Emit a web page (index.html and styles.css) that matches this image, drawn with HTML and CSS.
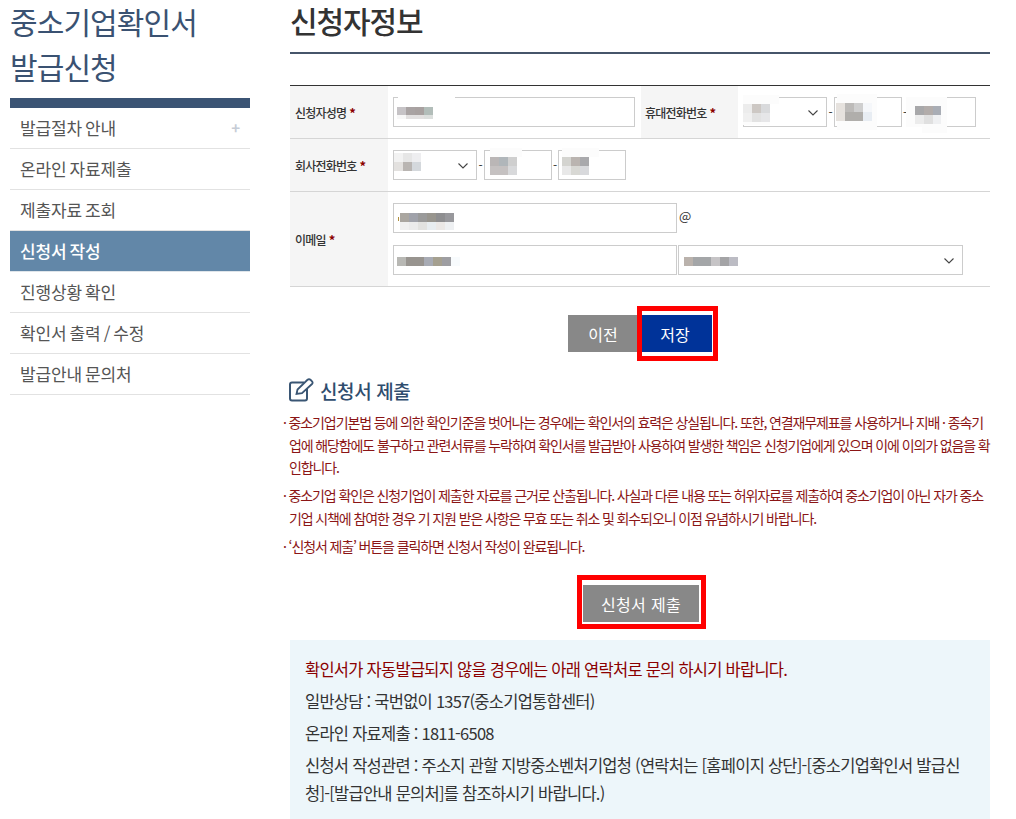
FILE: index.html
```html
<!DOCTYPE html>
<html lang="ko">
<head>
<meta charset="utf-8">
<title>신청자정보</title>
<link rel="stylesheet" href="styles.css">
</head>
<body>
<div class="page">
  <aside class="side">
    <h2 class="side-title">중소기업확인서<br>발급신청</h2>
    <ul class="menu">
      <li class="menu-item has-plus">발급절차 안내<span class="plus">+</span></li>
      <li class="menu-item">온라인 자료제출</li>
      <li class="menu-item">제출자료 조회</li>
      <li class="menu-item active">신청서 작성</li>
      <li class="menu-item">진행상황 확인</li>
      <li class="menu-item">확인서 출력 / 수정</li>
      <li class="menu-item">발급안내 문의처</li>
    </ul>
  </aside>
  <main class="main">
    <h1 class="page-title">신청자정보</h1>
    <div class="form">
      <div class="row row-a">
        <div class="th">신청자성명 <b>*</b></div>
        <div class="td name-cell"><div class="field w-name"><svg class="mosaic m-name" width="60" height="24" viewBox="0 0 60 24"><rect x="1" y="0" width="57" height="9" fill="#fff"/><rect x="0" y="10" width="9" height="8" fill="#c6c3c6"/><rect x="9" y="10" width="9" height="8" fill="#a9a3a3"/><rect x="18" y="10" width="9" height="8" fill="#a8a1a0"/><rect x="27" y="10" width="9" height="8" fill="#b2bdb9"/><rect x="0" y="18" width="9" height="4" fill="#f7f7f7"/><rect x="9" y="18" width="18" height="4" fill="#e2e0e0"/><rect x="27" y="18" width="9" height="4" fill="#dcdfdd"/></svg></div></div>
        <div class="th th-mid">휴대전화번호 <b>*</b></div>
        <div class="td phones">
          <div class="field select w-s"><svg class="mosaic m-p1" width="36" height="30" viewBox="0 0 36 30"><rect x="0" y="0" width="36" height="9" fill="#fcfcfc"/><rect x="0" y="9" width="27" height="21" fill="#fcfcfc"/><rect x="0" y="9" width="9" height="9" fill="#ececec"/><rect x="9" y="9" width="9" height="9" fill="#cdc8c4"/><rect x="18" y="9" width="9" height="9" fill="#d9dadc"/><rect x="0" y="18" width="9" height="9" fill="#f0f0f0"/><rect x="9" y="18" width="9" height="9" fill="#e2e2e2"/><rect x="18" y="18" width="9" height="9" fill="#e6e6e8"/></svg><svg class="chev" width="10" height="6" viewBox="0 0 10 6"><path d="M.5.500 5 5 9.500.5" fill="none" stroke="#444" stroke-width="1.100"/></svg></div>
          <span class="dash">-</span>
          <div class="field w-p"><svg class="mosaic m-p2" width="42" height="36" viewBox="0 0 42 36"><rect x="1" y="0" width="40" height="36" fill="#fcfcfc"/><rect x="0" y="9" width="9" height="18" fill="#e6e2de"/><rect x="9" y="9" width="9" height="9" fill="#bdbbb9"/><rect x="18" y="9" width="9" height="9" fill="#cfcfcf"/><rect x="9" y="18" width="18" height="9" fill="#b0aeab"/><rect x="27" y="9" width="9" height="9" fill="#f5f7fa"/><rect x="27" y="18" width="9" height="9" fill="#e8edf3"/></svg></div>
          <span class="dash dash-b">-</span>
          <div class="field w-p"><svg class="mosaic m-p3" width="41" height="36" viewBox="0 0 41 36"><rect x="0" y="0" width="41" height="30" fill="#fcfcfc"/><rect x="16" y="30" width="25" height="6" fill="#fcfcfc"/><rect x="9" y="9" width="9" height="9" fill="#a8a8aa"/><rect x="18" y="9" width="9" height="9" fill="#b2acaa"/><rect x="27" y="9" width="8" height="9" fill="#a9adb5"/><rect x="9" y="18" width="9" height="9" fill="#ececec"/><rect x="18" y="18" width="9" height="9" fill="#e0e0e0"/><rect x="27" y="18" width="8" height="9" fill="#eff0f2"/></svg></div>
        </div>
      </div>
      <div class="row row-a">
        <div class="th">회사전화번호 <b>*</b></div>
        <div class="td phones">
          <div class="field select w-s"><svg class="mosaic m-c1" width="27" height="18" viewBox="0 0 27 18"><rect x="0" y="0" width="9" height="9" fill="#f2f2f2"/><rect x="9" y="0" width="9" height="9" fill="#e6e6e6"/><rect x="18" y="0" width="9" height="9" fill="#eeeef0"/><rect x="0" y="9" width="9" height="9" fill="#e3e1df"/><rect x="9" y="9" width="9" height="9" fill="#b9b5b2"/><rect x="18" y="9" width="9" height="9" fill="#d4d8dc"/></svg><svg class="chev" width="10" height="6" viewBox="0 0 10 6"><path d="M.5.500 5 5 9.500.5" fill="none" stroke="#444" stroke-width="1.100"/></svg></div>
          <span class="dash">-</span>
          <div class="field w-p"><svg class="mosaic m-c2" width="32" height="27" viewBox="0 0 32 27"><rect x="0" y="0" width="32" height="9" fill="#fcfcfc"/><rect x="0" y="9" width="9" height="9" fill="#bab6b6"/><rect x="9" y="9" width="9" height="9" fill="#b0b6ba"/><rect x="18" y="9" width="9" height="9" fill="#cfcfcf"/><rect x="0" y="18" width="18" height="9" fill="#c5c1c1"/><rect x="18" y="18" width="9" height="9" fill="#d8d9db"/></svg></div>
          <span class="dash dash-b">-</span>
          <div class="field w-p"><svg class="mosaic m-c3" width="37" height="27" viewBox="0 0 37 27"><rect x="0" y="0" width="37" height="9" fill="#fcfcfc"/><rect x="0" y="9" width="9" height="9" fill="#d4d4d0"/><rect x="9" y="9" width="9" height="9" fill="#bab4b0"/><rect x="18" y="9" width="9" height="9" fill="#a9a9ac"/><rect x="0" y="18" width="9" height="9" fill="#e8e8e8"/><rect x="9" y="18" width="9" height="9" fill="#d8d8d4"/><rect x="18" y="18" width="9" height="9" fill="#d8d9dc"/></svg></div>
        </div>
      </div>
      <div class="row row-c">
        <div class="th">이메일 <b>*</b></div>
        <div class="td mail">
          <div class="mail-line">
            <div class="field w-m"><svg class="mosaic m-e1" width="56" height="17" viewBox="0 0 56 17"><rect x="0" y="4" width="1" height="4" fill="#b09040"/><rect x="2" y="0" width="9" height="9" fill="#aaa6a0"/><rect x="11" y="0" width="9" height="9" fill="#a0a2aa"/><rect x="20" y="0" width="9" height="9" fill="#9a9a9a"/><rect x="29" y="0" width="9" height="9" fill="#98958e"/><rect x="38" y="0" width="9" height="9" fill="#8e8e90"/><rect x="47" y="0" width="9" height="9" fill="#98989c"/><rect x="2" y="9" width="9" height="8" fill="#f0f0f0"/><rect x="11" y="9" width="9" height="8" fill="#ebebeb"/><rect x="20" y="9" width="9" height="8" fill="#e2e2e0"/><rect x="29" y="9" width="9" height="8" fill="#e8edf0"/><rect x="38" y="9" width="9" height="8" fill="#ebe8e6"/><rect x="47" y="9" width="9" height="8" fill="#eef0f2"/></svg></div>
            <span class="at">@</span>
          </div>
          <div class="mail-line">
            <div class="field w-m"><svg class="mosaic m-e2" width="63" height="9" viewBox="0 0 63 9"><rect x="0" y="0" width="9" height="9" fill="#b8b8b4"/><rect x="9" y="0" width="18" height="9" fill="#98948f"/><rect x="27" y="0" width="9" height="9" fill="#a8abb4"/><rect x="36" y="0" width="9" height="9" fill="#a5a090"/><rect x="45" y="0" width="9" height="9" fill="#9e9ea2"/><rect x="54" y="0" width="9" height="9" fill="#f8fbfd"/></svg></div>
            <div class="field select w-ms"><svg class="mosaic m-e3" width="54" height="9" viewBox="0 0 54 9"><rect x="0" y="0" width="9" height="9" fill="#bab2ac"/><rect x="9" y="0" width="18" height="9" fill="#a4a6a8"/><rect x="27" y="0" width="9" height="9" fill="#c6c4c6"/><rect x="36" y="0" width="9" height="9" fill="#a4a4a6"/><rect x="45" y="0" width="9" height="9" fill="#bcbcc4"/></svg><svg class="chev" width="10" height="6" viewBox="0 0 10 6"><path d="M.5.500 5 5 9.500.5" fill="none" stroke="#444" stroke-width="1.100"/></svg></div>
          </div>
        </div>
      </div>
    </div>
    <div class="btns">
      <a class="btn gray">이전</a><a class="btn blue">저장<span class="mark mark-save"></span></a>
    </div>
    <h3 class="sub"><svg class="edit" width="28" height="24" viewBox="0 0 28 24"><path d="M16 4.500H4Q2 4.500 2 6.500V20.500Q2 22.500 4 22.500H17Q19 22.500 19 20.500V11" fill="none" stroke="#3a5674" stroke-width="2"/><path d="M8.500 16 9.500 11.500 19.500 1.800Q21 .7 22.500 1.800L24 3.300Q25.200 4.800 24 6L14 15.200Z" fill="none" stroke="#3a5674" stroke-width="1.800"/></svg>신청서 제출</h3>
    <ul class="notes">
      <li>중소기업기본법 등에 의한 확인기준을 벗어나는 경우에는 확인서의 효력은 상실됩니다. 또한, 연결재무제표를 사용하거나 지배 · 종속기업에 해당함에도 불구하고 관련서류를 누락하여 확인서를 발급받아 사용하여 발생한 책임은 신청기업에게 있으며 이에 이의가 없음을 확인합니다.</li>
      <li>중소기업 확인은 신청기업이 제출한 자료를 근거로 산출됩니다. 사실과 다른 내용 또는 허위자료를 제출하여 중소기업이 아닌 자가 중소기업 시책에 참여한 경우 기 지원 받은 사항은 무효 또는 취소 및 회수되오니 이점 유념하시기 바랍니다.</li>
      <li>‘신청서 제출’ 버튼을 클릭하면 신청서 작성이 완료됩니다.</li>
    </ul>
    <div class="btns btns-submit">
      <a class="btn gray wide">신청서 제출<span class="mark mark-submit"></span></a>
    </div>
    <div class="info">
      <p class="info-red">확인서가 자동발급되지 않을 경우에는 아래 연락처로 문의 하시기 바랍니다.</p>
      <p>일반상담 : 국번없이 1357(중소기업통합센터)</p>
      <p>온라인 자료제출 : 1811-6508</p>
      <p class="info-wrap">신청서 작성관련 : 주소지 관할 지방중소벤처기업청 (연락처는 [홈페이지 상단]-[중소기업확인서 발급신청]-[발급안내 문의처]를 참조하시기 바랍니다.)</p>
    </div>
  </main>
</div>
</body>
</html>
```
FILE: styles.css
```css
* { box-sizing: border-box; }
html, body { margin: 0; padding: 0; height: 819px; overflow: hidden; background: #fff; }
body { font-family: "Noto Sans CJK KR", "Noto Sans", sans-serif; color: #333; }
.page { display: flex; padding-left: 10px; }
.side { width: 240px; flex: none; }
.side-title { margin: -1px 0 0; font-size: 30px; line-height: 45px; font-weight: 400; color: #3a5272; letter-spacing: -.9px; }
.menu { list-style: none; margin: 9px 0 0; padding: 10px 0 0; background: linear-gradient(#3b5474, #3b5474) top / 100% 10px no-repeat; }
.menu-item { height: 41px; line-height: 39px; padding-left: 10px; font-size: 17px; letter-spacing: -.15px; word-spacing: -1.500px; color: #555; border-bottom: 1px solid #e2e2e2; display: flex; justify-content: space-between; }
.menu-item.active { background: #6287a8; color: #fff; font-weight: 500; border-bottom-color: #dfe5ea; }
.plus { color: #c6ccd6; font-size: 15px; font-weight: 700; padding-right: 10px; }
.main { width: 700px; margin-left: 40px; flex: none; }
.page-title { margin: 0; height: 54px; border-bottom: 2px solid #46556a; font-size: 30px; line-height: 40px; font-weight: 500; color: #333; letter-spacing: -1.100px; }
.form { margin-top: 31px; border-top: 1px solid #333; }
.row { display: flex; border-bottom: 1px solid #d5d5d5; }
.row-a { height: 53px; }
.row-c { height: 95px; }
.th { width: 98px; flex: none; background: #f5f5f5; padding-left: 5px; font-size: 12px; font-weight: 500; letter-spacing: -.8px; color: #333; display: flex; align-items: center; gap: 3px; }
.th b { color: #8b0000; font-size: 13px; }
.th-mid { width: 97px; padding-left: 4px; }
.td { padding-left: 5px; display: flex; align-items: flex-start; padding-top: 11px; }
.name-cell { width: 253px; }
.phones { flex: 1; }
.dash { width: 7px; font-size: 12px; line-height: 30px; text-align: center; }
.dash-b { width: 6px; }
.field { height: 30px; background: #fff; border: 1px solid #ccc; position: relative; flex: none; }
.chev { position: absolute; right: 8px; top: 12px; display: block; }
.mosaic { position: absolute; display: block; }
.m-name { left: 3px; top: -1px; }
.m-p1 { left: -1px; top: -3px; }
.m-p2 { left: 1px; top: -4px; }
.m-p3 { left: -3px; top: -1px; }
.m-c1 { left: 0; top: 2px; }
.m-c2 { left: 5px; top: -3px; }
.m-c3 { left: 3px; top: -3px; }
.m-e1 { left: 4px; top: 9px; }
.m-e2 { left: 3px; top: 11px; }
.m-e3 { left: 5px; top: 11px; }
.w-name { width: 242px; }
.w-s { width: 84px; }
.w-p { width: 68px; }
.w-m { width: 284px; }
.w-ms { width: 285px; margin-left: 1px; }
.mail { flex-direction: column; gap: 12px; }
.mail-line { display: flex; }
.at { font-size: 13px; margin-left: 2px; line-height: 26px; }
.btns { display: flex; justify-content: center; margin-top: 28px; }
.btn { height: 37px; width: 70px; display: flex; align-items: center; justify-content: center; color: #fff; font-size: 16px; position: relative; }
.gray { background: #888; }
.blue { background: #003399; width: 74px; }
.wide { width: 116px; margin-left: 2px; letter-spacing: .3px; }
.mark { position: absolute; border: 5px solid #f00; }
.mark-save { left: -1px; top: -9px; width: 81px; height: 55px; }
.mark-submit { left: -6px; top: -10px; width: 129px; height: 54px; }
.sub { margin: 24px 0 0 -2px; display: flex; align-items: center; gap: 4px; height: 28px; font-size: 19px; font-weight: 500; color: #2f4d6e; letter-spacing: -.4px; }
.edit { flex: none; }
.notes { list-style: none; margin: 7px 0 0 -8px; padding: 0; color: #8b1515; font-size: 14px; line-height: 22.500px; letter-spacing: -1.120px; width: 708px; }
.notes li { padding-left: 7px; text-indent: -6px; margin-bottom: 5.500px; }
.notes li::before { content: "· "; }
.btns-submit { margin-top: 28px; }
.info { margin-top: 18px; background: #edf6fa; padding: 13px 20px 0 15px; height: 180px; font-size: 16.500px; letter-spacing: -.75px; color: #333; }
.info p { margin: 0; line-height: 32px; }
.info .info-red { color: #8b0000; }
.info .info-wrap { line-height: 28px; margin-top: 2px; }
```
